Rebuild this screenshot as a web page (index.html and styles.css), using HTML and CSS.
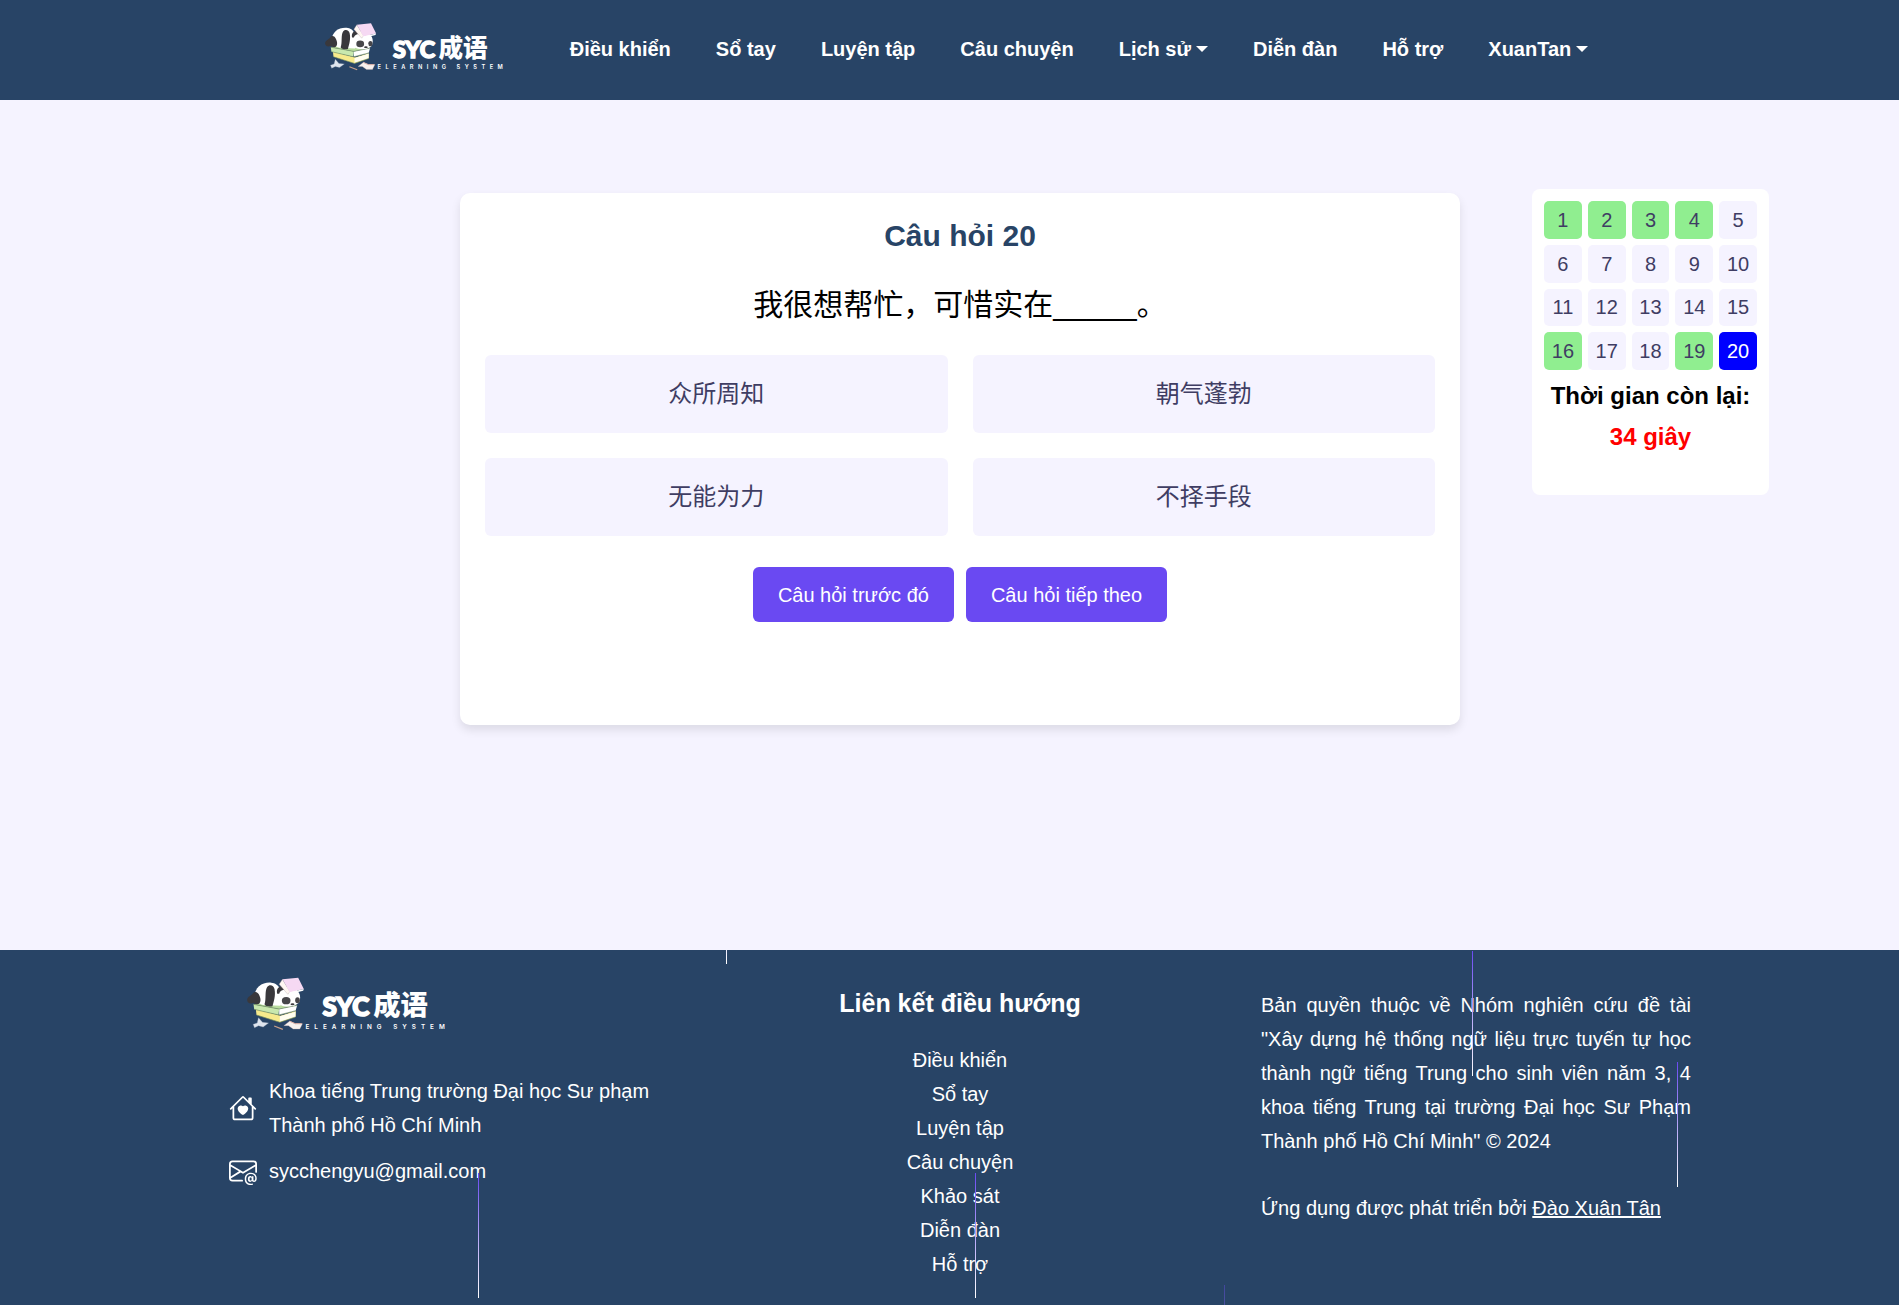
FILE: index.html
```html
<!DOCTYPE html>
<html lang="vi">
<head>
<meta charset="utf-8">
<meta name="viewport" content="width=device-width, initial-scale=1">
<title>SYC 成语 – Câu hỏi 20</title>
<link rel="stylesheet" href="styles.css">
</head>
<body>
<svg class="sprite" aria-hidden="true">
  <symbol id="logo" viewBox="100 100 620 180">
    <!-- stacked books -->
    <path d="M138 208 L212 228 L258 214 L257 232 L210 248 L140 226 Z" fill="#f7ea8c"/>
    <path d="M210 230 L257 216 L257 231 L210 246 Z" fill="#fffdf0"/>
    <path d="M131 194 L185 182 L262 196 L208 208 Z" fill="#b9dc9f"/>
    <path d="M131 194 L208 208 L206 226 L133 209 Z" fill="#c9e8ae"/>
    <path d="M208 208 L262 197 L257 214 L208 226 Z" fill="#ffffff"/>
    <path d="M131 194 L208 208 L262 197 M133 209 L207 226 L258 213 M140 226 L210 248 L257 232" fill="none" stroke="#6f8a5e" stroke-width="2"/>
    <!-- panda -->
    <path d="M134 172 C134 142 158 127 184 129 C208 131 218 150 212 198 L160 196 C146 192 136 186 134 172 Z" fill="#ffffff"/>
    <path d="M112 182 C112 172 120 170 128 163 C134 153 144 156 149 168 C156 184 150 194 142 194 C136 194 134 190 130 190 C120 194 113 190 112 182 Z" fill="#39383c"/>
    <path d="M172 142 C180 132 192 138 194 148 C198 168 192 184 188 200 C178 202 166 200 164 194 C170 178 164 154 172 142 Z" fill="#39383c"/>
    <path d="M204 170 C206 148 224 136 244 142 C268 148 276 170 268 188 C258 202 226 204 212 196 C204 188 203 180 204 170 Z" fill="#ffffff"/>
    <path d="M202 162 C198 146 210 137 222 141 L226 150 C216 150 210 154 208 162 Z" fill="#39383c"/>
    <ellipse cx="229" cy="183" rx="13" ry="11" fill="#47464a"/>
    <ellipse cx="263" cy="182" rx="7" ry="9" fill="#47464a"/>
    <ellipse cx="248" cy="194" rx="6" ry="3" fill="#39383c"/>
    <path d="M208 134 L218 119 L240 156 L234 164 Z" fill="#fff7f2" stroke="#a99a9f" stroke-width="1"/>
    <path d="M218 119 L265 114 L282 148 L240 158 Z" fill="#f6d9f3"/>
    <path d="M240 158 L282 148 L280 153 L238 164 Z" fill="#ffffff"/>
    <!-- open books and pencil -->
    <path d="M130 254 L142 250 L146 234 L158 248 L176 250 L160 262 L146 258 L134 264 Z" fill="#dfe5ee" stroke="#9aa6ba" stroke-width="1"/>
    <path d="M222 258 L240 244 L256 252 L278 252 L270 268 L250 268 L236 258 Z" fill="#f8f1ee" stroke="#b7a5a5" stroke-width="1"/>
    <path d="M240 245 L256 252 L276 252" fill="none" stroke="#e1b2a8" stroke-width="3"/>
    <path d="M193 259 L219 269" stroke="#c9a08a" stroke-width="4"/>
    <text class="logo-name" x="338" y="229">SYC</text>
    <text class="logo-han" x="490" y="225">成语</text>
    <text class="logo-tag" x="287" y="268">ELEARNING SYSTEM</text>
  </symbol>
</svg>

<header class="site-header">
  <a class="brand" href="#" aria-label="SYC 成语"><svg class="brand-logo"><use href="#logo"/></svg></a>
  <nav class="main-nav" aria-label="Chính">
    <a href="#">Điều khiển</a>
    <a href="#">Sổ tay</a>
    <a href="#">Luyện tập</a>
    <a href="#">Câu chuyện</a>
    <a class="has-menu" href="#">Lịch sử</a>
    <a href="#">Diễn đàn</a>
    <a href="#">Hỗ trợ</a>
    <a class="has-menu" href="#">XuanTan</a>
  </nav>
</header>

<main class="quiz">
  <section class="question-card">
    <h1 class="question-title">Câu hỏi 20</h1>
    <p class="question-text" lang="zh">我很想帮忙，可惜实在_____。</p>
    <div class="answers" lang="zh">
      <button class="answer" type="button">众所周知</button>
      <button class="answer" type="button">朝气蓬勃</button>
      <button class="answer" type="button">无能为力</button>
      <button class="answer" type="button">不择手段</button>
    </div>
    <div class="actions">
      <button class="action" type="button">Câu hỏi trước đó</button>
      <button class="action" type="button">Câu hỏi tiếp theo</button>
    </div>
  </section>

  <aside class="progress-panel">
    <div class="numbers">
      <button class="number done" type="button">1</button>
      <button class="number done" type="button">2</button>
      <button class="number done" type="button">3</button>
      <button class="number done" type="button">4</button>
      <button class="number" type="button">5</button>
      <button class="number" type="button">6</button>
      <button class="number" type="button">7</button>
      <button class="number" type="button">8</button>
      <button class="number" type="button">9</button>
      <button class="number" type="button">10</button>
      <button class="number" type="button">11</button>
      <button class="number" type="button">12</button>
      <button class="number" type="button">13</button>
      <button class="number" type="button">14</button>
      <button class="number" type="button">15</button>
      <button class="number done" type="button">16</button>
      <button class="number" type="button">17</button>
      <button class="number" type="button">18</button>
      <button class="number done" type="button">19</button>
      <button class="number current" type="button">20</button>
    </div>
    <p class="timer">Thời gian còn lại: <span class="timer-value">34 giây</span></p>
  </aside>
</main>

<footer class="site-footer">
  <div class="footer-columns">
    <div class="contact">
      <svg class="footer-logo" role="img" aria-label="SYC 成语"><use href="#logo"/></svg>
      <div class="contact-row">
        <svg class="contact-icon" viewBox="0 0 16 16" aria-hidden="true"><path d="M8 6.982C9.664 5.309 13.825 8.236 8 12 2.175 8.236 6.336 5.309 8 6.982"/><path d="M8.707 1.5a1 1 0 0 0-1.414 0L.646 8.146a.5.5 0 0 0 .708.707L2 8.207V13.5A1.5 1.5 0 0 0 3.5 15h9a1.5 1.5 0 0 0 1.5-1.5V8.207l.646.646a.5.5 0 0 0 .708-.707L13 5.793V2.5a.5.5 0 0 0-.5-.5h-1a.5.5 0 0 0-.5.5v1.293zM13 7.207V13.5a.5.5 0 0 1-.5.5h-9a.5.5 0 0 1-.5-.5V7.207l5-5z"/></svg>
        <span>Khoa tiếng Trung trường Đại học Sư phạm Thành phố Hồ Chí Minh</span>
      </div>
      <div class="contact-row">
        <svg class="contact-icon" viewBox="0 0 16 16" aria-hidden="true"><path d="M2 2a2 2 0 0 0-2 2v8.01A2 2 0 0 0 2 14h5.5a.5.5 0 0 0 0-1H2a1 1 0 0 1-.966-.741l5.64-3.471L8 9.583l7-4.2V8.5a.5.5 0 0 0 1 0V4a2 2 0 0 0-2-2zm3.708 6.208L1 11.105V5.383zM1 4.217V4a1 1 0 0 1 1-1h12a1 1 0 0 1 1 1v.217l-7 4.2z"/><path d="M14.247 14.269c1.01 0 1.587-.857 1.587-2.025v-.21C15.834 10.43 14.64 9 12.52 9h-.035C10.42 9 9 10.36 9 12.432v.214C9 14.82 10.438 16 12.358 16h.044c.594 0 1.018-.074 1.237-.175v-.73c-.245.11-.673.18-1.18.18h-.044c-1.334 0-2.571-.788-2.571-2.655v-.157c0-1.657 1.058-2.724 2.64-2.724h.04c1.535 0 2.484 1.05 2.484 2.326v.118c0 .975-.324 1.39-.639 1.39-.232 0-.41-.148-.41-.42v-2.19h-.906v.569h-.03c-.084-.298-.368-.63-.954-.63-.778 0-1.259.555-1.259 1.4v.528c0 .892.49 1.434 1.26 1.434.471 0 .896-.227 1.014-.643h.043c.118.42.617.648 1.12.648m-2.453-1.588v-.227c0-.546.227-.791.573-.791.297 0 .572.192.572.708v.367c0 .573-.253.744-.564.744-.354 0-.581-.215-.581-.8Z"/></svg>
        <a href="mailto:sycchengyu@gmail.com">sycchengyu@gmail.com</a>
      </div>
    </div>
    <nav class="footer-nav" aria-labelledby="footer-nav-title">
      <h2 class="footer-title" id="footer-nav-title">Liên kết điều hướng</h2>
      <a href="#">Điều khiển</a>
      <a href="#">Sổ tay</a>
      <a href="#">Luyện tập</a>
      <a href="#">Câu chuyện</a>
      <a href="#">Khảo sát</a>
      <a href="#">Diễn đàn</a>
      <a href="#">Hỗ trợ</a>
    </nav>
    <div class="legal">
      <p>Bản quyền thuộc về Nhóm nghiên cứu đề tài "Xây dựng hệ thống ngữ liệu trực tuyến tự học thành ngữ tiếng Trung cho sinh viên năm 3, 4 khoa tiếng Trung tại trường Đại học Sư Phạm Thành phố Hồ Chí Minh" © 2024</p>
      <p>Ứng dụng được phát triển bởi <a class="credit" href="#">Đào Xuân Tân</a></p>
    </div>
  </div>
  <div class="rain" aria-hidden="true">
    <span class="drop drop-a"></span>
    <span class="drop drop-b"></span>
    <span class="drop drop-c"></span>
    <span class="drop drop-d"></span>
    <span class="drop drop-e"></span>
    <span class="drop drop-f"></span>
  </div>
</footer>
</body>
</html>
```
FILE: styles.css
```css
:root {
  --navy: #284466;
  --lilac: #f5f3ff;
  --violet: #6a49f2;
  --ink: #3f3d63;
}

* {
  box-sizing: border-box;
}

body {
  display: flex;
  flex-direction: column;
  min-height: 100vh;
  margin: 0;
  background: var(--lilac);
  color: #000;
  font: 20px/34px "Liberation Sans", Arial, "Noto Sans CJK SC", sans-serif;
}

h1,
h2,
p {
  margin: 0;
}

a {
  color: inherit;
  text-decoration: none;
}

button {
  border: 0;
  font: inherit;
  cursor: pointer;
}

.sprite {
  display: none;
}

/* Logo lettering */
.logo-name {
  fill: #fff;
  stroke: #fff;
  stroke-width: 5px;
  font: 900 78px Lato, sans-serif;
}

.logo-han {
  fill: #fff;
  font: 900 82px "Noto Sans CJK SC", sans-serif;
}

.logo-tag {
  fill: #fff;
  font: 600 19px Inter, sans-serif;
  letter-spacing: 15px;
}

/* Header */
.site-header {
  display: flex;
  justify-content: center;
  align-items: center;
  gap: 62px;
  min-height: 100px;
  background: var(--navy);
  color: #fff;
}

.brand {
  padding: 0 0 8px 10px;
}

.brand-logo {
  display: block;
  width: 187px;
  height: 54px;
}

.main-nav {
  display: flex;
  gap: 45px;
  padding-bottom: 2px;
  font-weight: 700;
  white-space: nowrap;
}

.has-menu {
  display: flex;
  align-items: center;
  gap: 5px;
}

.has-menu::after {
  content: "";
  border: 6px solid transparent;
  border-top-color: #fff;
  border-bottom: 0;
}

/* Quiz */
.quiz {
  display: grid;
  grid-template-columns: 1fr minmax(0, 1000px) 1fr;
  align-items: start;
  min-height: 850px;
  padding: 89px 0 0 21px;
}

.question-card {
  grid-column: 2;
  display: flex;
  flex-direction: column;
  min-height: 532px;
  margin-top: 4px;
  padding: 25px;
  border-radius: 10px;
  background: #fff;
  box-shadow: 0 5px 10px rgba(0, 0, 0, 0.1);
  text-align: center;
}

.question-title {
  margin-bottom: 25px;
  color: var(--navy);
  font-size: 30px;
  line-height: 36px;
}

.question-text {
  margin-bottom: 25px;
  font-size: 30px;
  line-height: 51px;
}

.answers {
  display: grid;
  grid-template-columns: 1fr 1fr;
  gap: 25px;
}

.answer {
  min-height: 78px;
  border-radius: 6px;
  background: var(--lilac);
  color: var(--ink);
  font-size: 24px;
}

.actions {
  display: flex;
  justify-content: center;
  gap: 12px;
  margin-top: 31px;
}

.action {
  min-height: 55px;
  padding: 0 25px;
  border-radius: 6px;
  background: var(--violet);
  color: #fff;
}

.progress-panel {
  width: 237px;
  min-height: 306px;
  margin-left: 72px;
  padding: 12px;
  border-radius: 8px;
  background: #fff;
}

.numbers {
  display: grid;
  grid-template-columns: repeat(5, 1fr);
  gap: 6px;
}

.number {
  aspect-ratio: 1;
  padding: 0;
  border-radius: 5px;
  background: var(--lilac);
  color: var(--ink);
  line-height: 30px;
}

.number.done {
  background: #90ee90;
}

.number.current {
  background: #00f;
  color: #fff;
}

.timer {
  margin-top: 5px;
  font-size: 24px;
  font-weight: 700;
  line-height: 41px;
  text-align: center;
}

.timer-value {
  display: block;
  color: #f00;
}

/* Footer */
.site-footer {
  position: relative;
  flex: 1;
  overflow: hidden;
  padding: 23px 0 24px 21px;
  background: var(--navy);
  color: #fff;
}

.footer-columns {
  display: grid;
  grid-template-columns: repeat(3, 1fr);
  gap: 86px;
  max-width: 1462px;
  margin: 0 auto;
}

.contact {
  display: flex;
  flex-direction: column;
  gap: 12px;
}

.footer-logo {
  width: 207px;
  height: 60px;
  margin: 0 0 29px 14px;
}

.contact-row {
  display: flex;
  align-items: center;
  gap: 12px;
}

.contact-icon {
  flex: none;
  width: 28px;
  height: 28px;
  fill: #fff;
}

.footer-nav {
  display: flex;
  flex-direction: column;
  align-items: center;
  padding-top: 15px;
}

.footer-title {
  margin-bottom: 25px;
  font-size: 25px;
  line-height: 30px;
}

.legal {
  display: flex;
  flex-direction: column;
  gap: 33px;
  padding-top: 15px;
  text-align: justify;
}

.credit {
  text-decoration: underline;
}

/* Falling streaks over the footer */
.rain {
  position: absolute;
  inset: 0;
  pointer-events: none;
}

.drop {
  position: absolute;
  width: 1px;
  height: 125px;
  background: linear-gradient(var(--violet), #fff);
}

.drop-a {
  top: 223px;
  left: 25.15%;
}

.drop-b {
  top: -111px;
  left: 38.25%;
}

.drop-c {
  top: 223px;
  left: 51.35%;
}

.drop-d {
  top: 335px;
  left: 64.45%;
  opacity: 0.4;
}

.drop-e {
  top: 1px;
  left: 77.5%;
}

.drop-f {
  top: 112px;
  left: 88.3%;
}
```
